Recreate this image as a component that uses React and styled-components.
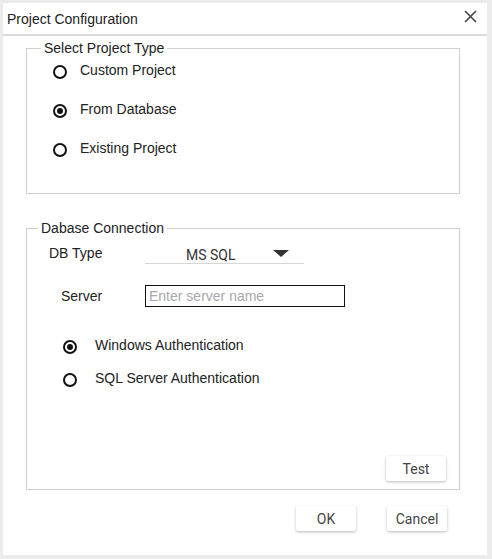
import styled, { createGlobalStyle } from 'styled-components';

const GlobalStyle = createGlobalStyle`
  html, body {
    margin: 0;
    padding: 0;
    background: #ebebeb;
  }
  body {
    font-family: "Liberation Sans", Arial, sans-serif;
    font-size: 14px;
    color: #222;
  }
`;

// 다이얼로그 프레임
const Page = styled.div`
  padding: 3px 5px 4px 3px;
  width: 492px;
  height: 559px;
  box-sizing: border-box;
`;
const Dialog = styled.div`
  display: flex;
  flex-direction: column;
  height: 100%;
  background: #fff;
`;
const Header = styled.div`
  display: flex;
  align-items: center;
  justify-content: space-between;
  height: 31px;
  padding: 0 10px 0 4px;
  border-bottom: 2px solid #dcdcdc;
`;
const Title = styled.span`
  font-size: 14px;
  color: #222;
  padding-top: 1px;
`;
const CloseButton = styled.button`
  display: grid;
  place-content: center;
  margin: 0;
  padding: 0;
  border: 0;
  background: transparent;
  width: 14px;
  height: 14px;
  margin-top: -5px;
`;
const Body = styled.div`
  display: flex;
  flex-direction: column;
  padding: 0 27px 0 23px;
`;
const Group = styled.fieldset`
  margin: ${(p) => p.$top}px 0 0 0;
  padding: 0;
  border: 1px solid #cfcfcf;
  min-width: 0;
`;
const GroupContent = styled.div`
  display: flex;
  flex-direction: column;
  padding: ${(p) => p.$pad};
`;
const Legend = styled.legend`
  margin-left: ${(p) => p.$offset}px;
  padding: 0 3px;
  font-size: 14px;
  line-height: 16px;
  color: #222;
`;
const RadioRow = styled.label`
  display: flex;
  align-items: center;
  height: 20px;
  gap: ${(p) => p.$gap}px;
  margin-top: ${(p) => p.$top || 0}px;
  font-size: 14px;
  color: #222;
`;
const RadioCircle = styled.span`
  display: grid;
  place-content: center;
  width: 14px;
  height: 14px;
  margin-top: 3px;
  box-sizing: border-box;
  border: 2px solid #111;
  border-radius: 50%;
  &::after {
    content: '';
    display: ${(p) => (p.$checked ? 'block' : 'none')};
    width: 6px;
    height: 6px;
    border-radius: 50%;
    background: #111;
  }
`;
const FieldRow = styled.div`
  display: flex;
  align-items: center;
  height: 22px;
  margin-top: ${(p) => p.$top || 0}px;
  padding-left: ${(p) => p.$indent}px;
`;
const FieldLabel = styled.span`
  width: ${(p) => p.$w}px;
  font-size: 14px;
  color: #222;
`;
const Select = styled.div`
  position: relative;
  width: 159px;
  height: 22px;
  box-sizing: border-box;
  border-bottom: 1px solid #d6d6d6;
  display: flex;
  align-items: center;
  font-family: Roboto, "Liberation Sans", sans-serif;
  font-size: 14px;
  color: #333;
  padding: 4px 0 0 41px;
`;
const Caret = styled.span`
  position: absolute;
  right: 15px;
  top: 8px;
  width: 0;
  height: 0;
  border-left: 8px solid transparent;
  border-right: 8px solid transparent;
  border-top: 7px solid #333;
`;
const Input = styled.input`
  width: 200px;
  height: 22px;
  box-sizing: border-box;
  margin: 0;
  padding: 0 3px;
  border: 1px solid #111;
  font-family: "Liberation Sans", Arial, sans-serif;
  font-size: 14px;
  color: #222;
  &::placeholder {
    color: #a8a8a8;
  }
`;
const ButtonBar = styled.div`
  display: flex;
  justify-content: flex-end;
  gap: 31px;
  margin-top: ${(p) => p.$top}px;
  padding-right: ${(p) => p.$right}px;
`;
const Button = styled.button`
  width: 60px;
  height: 25px;
  margin: 0;
  padding: 0;
  border: 0;
  border-radius: 2px;
  background: #fff;
  box-shadow: 0 1px 3px rgba(0, 0, 0, 0.28);
  font-family: Roboto, "Liberation Sans", sans-serif;
  font-size: 14px;
  color: #444;
`;

function Radio({ checked, gap, top, children }) {
  return (
    <RadioRow $gap={gap} $top={top}>
      <RadioCircle $checked={checked} />
      {children}
    </RadioRow>
  );
}

function App() {
  return (
    <Page>
      <GlobalStyle />
      <Dialog>
        <Header>
          <Title>Project Configuration</Title>
          <CloseButton>
            <svg width="13" height="13" viewBox="0 0 13 13">
              <path d="M1 1L12 12M12 1L1 12" stroke="#444" strokeWidth="1.6" />
            </svg>
          </CloseButton>
        </Header>
        <Body>
          <Group $top={4}>
            <Legend $offset={14}>Select Project Type</Legend>
            <GroupContent $pad="4px 0 35px 26px">
              <Radio gap={13}>Custom Project</Radio>
              <Radio gap={13} top={19} checked>From Database</Radio>
              <Radio gap={13} top={19}>Existing Project</Radio>
            </GroupContent>
          </Group>
          <Group $top={26}>
            <Legend $offset={11}>Dabase Connection</Legend>
            <GroupContent $pad="6px 13px 8px 0">
              <FieldRow $indent={22}>
                <FieldLabel $w={96}>DB Type</FieldLabel>
                <Select>
                  MS SQL
                  <Caret />
                </Select>
              </FieldRow>
              <FieldRow $indent={34} $top={21}>
                <FieldLabel $w={84}>Server</FieldLabel>
                <Input placeholder="Enter server name" />
              </FieldRow>
              <FieldRow $indent={36} $top={27}>
                <Radio gap={18} checked>Windows Authentication</Radio>
              </FieldRow>
              <FieldRow $indent={36} $top={11}>
                <Radio gap={18}>SQL Server Authentication</Radio>
              </FieldRow>
              <ButtonBar $top={67} $right={0}>
                <Button>Test</Button>
              </ButtonBar>
            </GroupContent>
          </Group>
          <ButtonBar $top={16} $right={13}>
            <Button>OK</Button>
            <Button>Cancel</Button>
          </ButtonBar>
        </Body>
      </Dialog>
    </Page>
  );
}

export default App;
